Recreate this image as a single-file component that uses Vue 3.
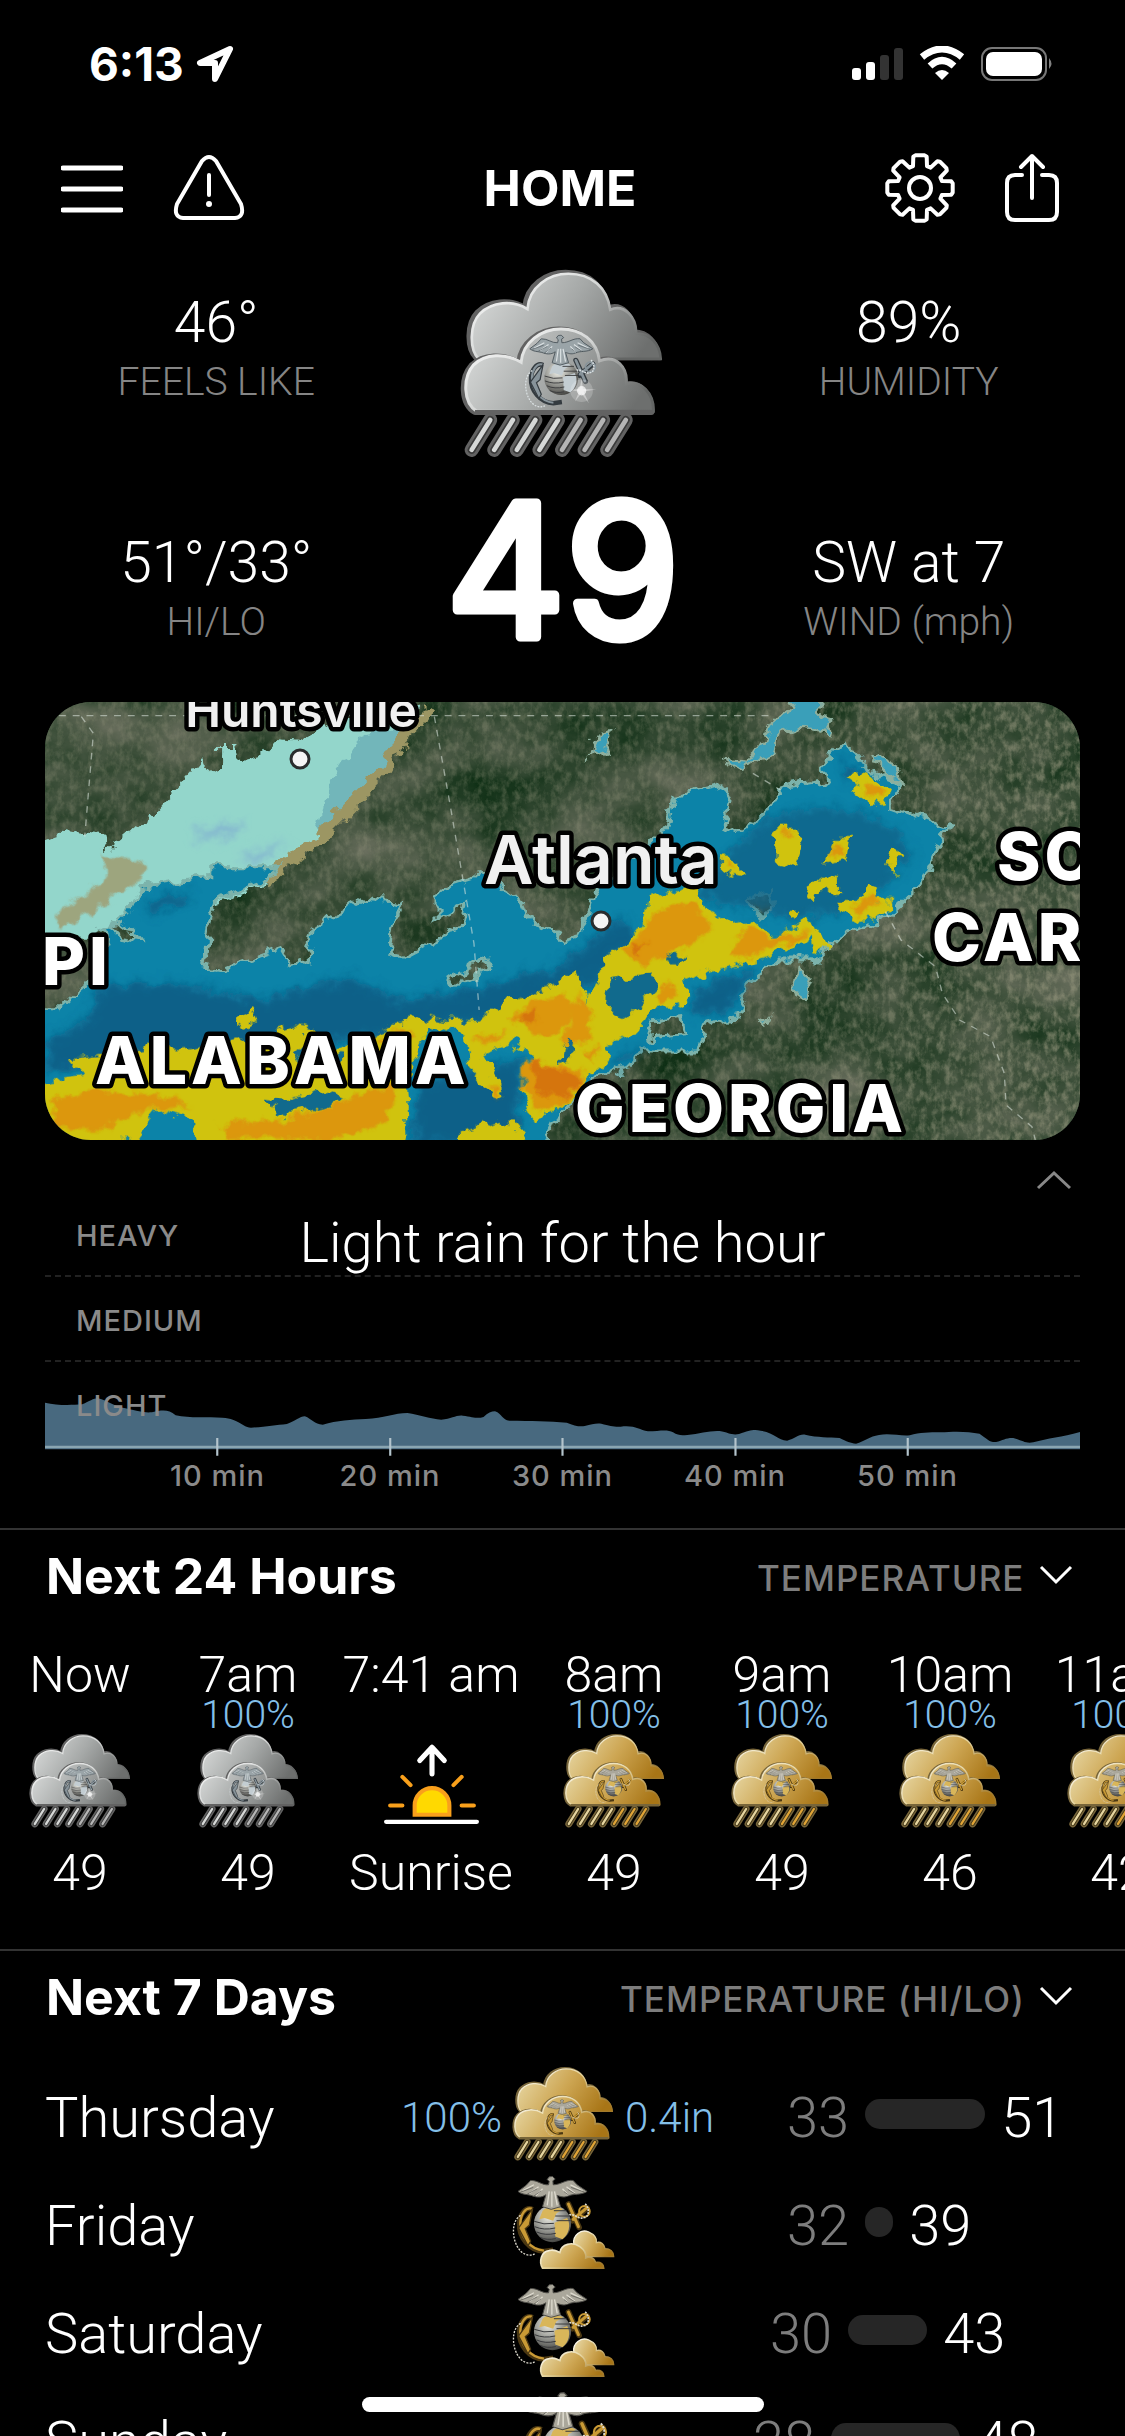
<template>
	<div class="screen">
		<!-- shared drawings, one set for night (silver) and one for day (gold) -->
		<svg class="defs" aria-hidden="true">
			<template v-for="tone in tones" :key="tone.name">
				<linearGradient :id="'body-' + tone.name" x1="0" y1="0.3" x2="1" y2="0.6">
					<stop offset="0" :stop-color="tone.light" />
					<stop offset="0.5" :stop-color="tone.mid" />
					<stop offset="1" :stop-color="tone.dark" />
				</linearGradient>
				<linearGradient :id="'rim-' + tone.name" x1="0" y1="0" x2="1" y2="0.7">
					<stop offset="0" stop-color="#fff" />
					<stop offset="0.5" :stop-color="tone.light" />
					<stop offset="1" :stop-color="tone.edge" />
				</linearGradient>
				<radialGradient :id="'globe-' + tone.name" cx="0.4" cy="0.3" r="0.75">
					<stop offset="0" stop-color="#f2f2ea" />
					<stop offset="0.5" stop-color="#9a9b96" />
					<stop offset="1" stop-color="#3d3d3a" />
				</radialGradient>
				<symbol :id="'emblem-' + tone.name" viewBox="36 376 240 248">
					<path d="M98 478C78 468 60 492 58 520C56 562 88 602 132 604L160 600" fill="none" :stroke="tone.anchorDark" stroke-width="15" />
					<path d="M96 476C76 470 62 494 61 520C60 560 90 598 132 602" fill="none" :stroke="tone.anchor" stroke-width="7" />
					<path d="M56 534L98 476L88 526L76 536L92 574L84 588Z" :fill="tone.anchor" :stroke="tone.anchorDark" stroke-width="4" />
					<path d="M62 496C34 512 36 562 52 590C64 612 86 622 104 612" fill="none" :stroke="tone.rope" stroke-width="4" stroke-dasharray="6 4" />
					<path d="M206 462L238 532M218 512L262 474" :stroke="tone.anchorDark" stroke-width="17" stroke-linecap="round" />
					<path d="M206 462L236 530M220 508L260 474" :stroke="tone.anchor" stroke-width="9" stroke-linecap="round" />
					<circle cx="254" cy="484" r="16" fill="none" :stroke="tone.anchor" stroke-width="6" />
					<path d="M200 498C226 484 232 512 256 502C272 496 266 466 254 460" fill="none" :stroke="tone.rope" stroke-width="5" stroke-dasharray="6 3" />
					<circle cx="158" cy="521" r="56" :fill="'url(#globe-' + tone.name + ')'" />
					<path d="M128 482C140 468 172 466 190 478L170 490L160 512L134 504L118 508Z" :fill="tone.land" />
					<path d="M164 518L202 504C214 524 208 552 188 568L166 560Z" :fill="tone.land" />
					<path d="M103 514Q132 526 162 520M104 530Q132 542 166 534M110 546Q136 558 168 550M120 562Q140 572 168 566M162 482H200M166 498H210M170 512H213" fill="none" stroke="#37383a" stroke-width="3" />
					<path d="M148 380L158 379L166 387L159 392L160 404C184 404 196 388 220 391L232 404L262 424C244 436 220 430 204 438C190 444 180 438 172 436L182 470L154 478L128 470L138 434C124 444 108 442 94 436C78 432 66 434 54 424L78 406L92 391C114 390 126 406 146 404L148 394L142 388Z" :fill="tone.eagle" :stroke="tone.eagleDark" stroke-width="3" />
					<path d="M68 422L102 404M88 430L116 410M108 436L128 416M248 422L212 404M226 430L200 410M206 436L188 416M148 424L142 466M156 424V470M164 424L172 466" fill="none" :stroke="tone.rope" stroke-width="4" />
					<path d="M62 426L100 412M82 432L112 416M102 438L124 422M254 426L214 412M230 434L204 418M210 438L192 424" fill="none" :stroke="tone.eagleDark" stroke-width="2" />
				</symbol>
				<symbol :id="'storm-' + tone.name" viewBox="120 50 620 575">
					<path :d="backCloud" :fill="tone.shadow" :stroke="tone.shadow" stroke-width="16" />
					<path :d="backCloud" :fill="'url(#body-' + tone.name + ')'" :stroke="'url(#rim-' + tone.name + ')'" stroke-width="8" transform="translate(8 4)" />
					<path :d="frontCloud" :fill="tone.shadow" :stroke="tone.shadow" stroke-width="18" stroke-linejoin="round" />
					<path :d="frontCloud" :fill="'url(#body-' + tone.name + ')'" :stroke="'url(#rim-' + tone.name + ')'" stroke-width="9" transform="translate(6 -2)" />
					<path d="M165 482H700" :stroke="tone.shadow" stroke-width="12" />
					<use :href="'#emblem-' + tone.name" x="308" y="248" width="230" height="226" />
					<g v-if="tone.name === 'silver'">
						<circle cx="486" cy="418" r="34" fill="#fff" opacity="0.2" />
						<path d="M486 382L490 413L530 414L492 420L508 456L485 426L466 450L478 421L452 416L480 412Z" fill="#fff" opacity="0.4" />
						<circle cx="486" cy="418" r="14" fill="#fff" opacity="0.7" />
					</g>
					<g v-for="n in 7" :key="n" stroke-linecap="round">
						<path :d="drop(n)" :stroke="tone.shadow" stroke-width="42" />
						<path :d="drop(n)" :stroke="tone.groove" stroke-width="24" />
						<path :d="drop(n)" :stroke="n < 5 ? tone.light : tone.rain" stroke-width="14" />
					</g>
				</symbol>
			</template>
			<symbol id="partly" viewBox="36 376 310 280">
				<use href="#emblem-gold" x="36" y="376" width="240" height="248" />
				<path d="M222 582C218 556 244 536 266 546C284 554 292 566 290 578C304 574 314 584 316 596C332 596 342 606 342 620H250Z" fill="url(#body-gold)" stroke="url(#rim-gold)" stroke-width="4" />
				<path d="M128 655C116 636 124 604 148 602C160 598 168 602 180 608C184 582 218 574 240 590C254 600 260 612 258 624C272 618 286 626 288 638C304 636 312 644 312 655Z" fill="url(#body-gold)" stroke="url(#rim-gold)" stroke-width="5" />
			</symbol>
			<symbol id="clear" viewBox="36 376 310 280">
				<use href="#emblem-gold" x="54" y="376" width="272" height="280" />
			</symbol>
			<symbol id="sunrise" viewBox="0 0 99 94">
				<path d="M50 40V15M38 27L50 14L62 27" fill="none" stroke="#fff" stroke-width="5" stroke-linecap="round" stroke-linejoin="round" />
				<path d="M9 71H21M79 71H91M21 43L29 51M79 43L71 51" stroke="#f9a01b" stroke-width="4" stroke-linecap="round" />
				<path d="M33 80V71A17 17 0 0 1 67 71V80Z" fill="#ffd900" stroke="#f9a01b" stroke-width="4" />
				<path d="M5 87H94" stroke="#fff" stroke-width="4" stroke-linecap="round" />
			</symbol>
		</svg>

		<div class="status">
			<div class="clock">
				<span>6:13</span>
				<svg class="locate" viewBox="0 0 38 38"><path d="M34 4L4 18H19V34Z" fill="none" stroke="#fff" stroke-width="6" stroke-linejoin="round" /></svg>
			</div>
			<svg class="signals" viewBox="0 0 202 36">
				<g fill="#fff">
					<rect x="0" y="22" width="9" height="12" rx="3" />
					<rect x="14" y="16" width="9" height="18" rx="3" />
					<rect x="28" y="9" width="9" height="25" rx="3" opacity="0.2" />
					<rect x="42" y="2" width="9" height="32" rx="3" opacity="0.2" />
					<path d="M90 34L83 27Q90 21 97 27Z" />
					<rect x="134" y="6" width="56" height="24" rx="7" />
					<path d="M197 12Q202 18 197 23Z" opacity="0.5" />
				</g>
				<path d="M70 11Q90 -5 110 11M78 20Q90 9 102 20" fill="none" stroke="#fff" stroke-width="7" />
				<rect x="130" y="2" width="64" height="32" rx="10" fill="none" stroke="#777" stroke-width="2" />
			</svg>
		</div>

		<header class="topbar">
			<div class="side">
				<button type="button" aria-label="Menu">
					<svg width="62" height="70" viewBox="0 0 62 70"><path d="M2 15H60M2 36H60M2 57H60" stroke="#fff" stroke-width="5" stroke-linecap="round" /></svg>
				</button>
				<button type="button" aria-label="Alerts">
					<svg width="72" height="70" viewBox="0 0 72 70" fill="none" stroke="#fff" stroke-width="4">
						<path d="M29 8Q36 0 43 8L68 51Q72 64 62 65H10Q0 64 4 51Z" />
						<path d="M36 22V42" stroke-linecap="round" />
						<circle cx="36" cy="51" r="3" fill="#fff" stroke="none" />
					</svg>
				</button>
			</div>
			<h1>HOME</h1>
			<div class="side end">
				<button type="button" aria-label="Settings">
					<svg width="70" height="70" viewBox="0 0 70 70" fill="none" stroke="#fff" stroke-width="4" stroke-linejoin="round">
						<path :d="gear" />
						<circle cx="35" cy="35" r="11" />
					</svg>
				</button>
				<button type="button" aria-label="Share">
					<svg width="54" height="70" viewBox="0 0 54 70" fill="none" stroke="#fff" stroke-width="4" stroke-linecap="round" stroke-linejoin="round">
						<path d="M17 22H10Q2 22 2 30V59Q2 67 10 67H44Q52 67 52 59V30Q52 22 44 22H37M27 45V3M16 14L27 3L38 14" />
					</svg>
				</button>
			</div>
		</header>

		<section class="current">
			<div class="stats">
				<div class="stat"><strong>46°</strong><span>FEELS LIKE</span></div>
				<div class="stat"><strong>51°/33°</strong><span>HI/LO</span></div>
			</div>
			<div class="now">
				<svg class="now-icon"><use href="#storm-silver" /></svg>
				<svg class="now-temp" viewBox="0 0 260 160"><text x="130" y="147">49</text></svg>
			</div>
			<div class="stats">
				<div class="stat"><strong>89%</strong><span>HUMIDITY</span></div>
				<div class="stat"><strong>SW at 7</strong><span>WIND (mph)</span></div>
			</div>
		</section>

		<div class="map">
			<svg viewBox="0 0 1035 438" preserveAspectRatio="xMidYMid slice" role="img" aria-label="Radar map">
				<filter id="terrain" x="0" y="0" width="1" height="1" color-interpolation-filters="sRGB">
					<feTurbulence type="fractalNoise" baseFrequency="0.012 0.016" numOctaves="6" seed="8" />
					<feColorMatrix values="0.5 0 0 0 -0.02  0.35 0 0 0 0.13  0.4 0 0 0 0.02  0 0 0 0 1" />
				</filter>
				<filter id="hills" x="0" y="0" width="1" height="1" color-interpolation-filters="sRGB">
					<feTurbulence type="fractalNoise" baseFrequency="0.16 0.1" numOctaves="4" seed="3" />
					<feColorMatrix values="0 0 0 0 0.6  0 0 0 0 0.6  0 0 0 0 0.5  0 2.6 0 0 -1.05" />
				</filter>
				<filter id="ragged" x="-5%" y="-5%" width="110%" height="110%" color-interpolation-filters="sRGB">
					<feTurbulence type="fractalNoise" baseFrequency="0.07" numOctaves="3" seed="5" />
					<feDisplacementMap in="SourceGraphic" scale="18" xChannelSelector="R" yChannelSelector="G" />
				</filter>
				<filter id="soft"><feGaussianBlur stdDeviation="14" /></filter>
				<filter id="softer"><feGaussianBlur stdDeviation="5" /></filter>
				<linearGradient id="east">
					<stop offset="0" stop-color="#fff" stop-opacity="0.3" />
					<stop offset="0.6" stop-color="#fff" stop-opacity="0.35" />
					<stop offset="1" stop-color="#fff" stop-opacity="0.6" />
				</linearGradient>
				<mask id="fade"><rect width="1035" height="438" fill="url(#east)" /></mask>
				<rect width="1035" height="438" filter="url(#terrain)" />
				<g mask="url(#fade)"><rect width="1035" height="438" filter="url(#hills)" /></g>
				<g filter="url(#ragged)">
					<g transform="translate(-5 -12) scale(0.3444 0.3333)">
						<path d="M-30 460L60 425L190 440L195 480L250 430L330 370L400 290L470 205L490 250L520 240L520 165L570 165L580 215L650 195L690 150L740 155L840 100L1050 60L1100 40L1060 150L1010 240L900 350L800 470L700 520L640 590L480 650L250 690L150 740L-30 740Z" fill="#93d6cb" />
						<path d="M940 130L1050 110L1000 250L880 370L800 460L830 300L870 240Z" fill="#72b6ba" />
						<path d="M1130 60L1060 130L1000 240L900 350L800 455L700 530L640 580" fill="none" stroke="#9c9663" stroke-width="34" />
						<path d="M60 720L200 630L300 560L300 520L180 490L200 560L40 680Z" fill="#a0996c" opacity="0.8" filter="url(#softer)" />
						<path d="M460 420L600 390L560 440L440 450ZM580 500L720 450L680 490L620 525Z" fill="#84b8cf" filter="url(#soft)" />
						<path d="M290 590L490 560L490 530L700 530L640 580L510 630L490 700L470 830L530 840L700 775L730 830L775 810L790 720L860 670L950 625L1050 640L1030 700L1015 790L1060 800L1150 750L1230 700L1240 640L1150 690L1150 630L1200 580L1290 550L1400 630L1430 700L1500 720L1520 760L1550 750L1580 710L1610 600L1780 455L1820 400L1840 320L1980 285L2005 340L1980 410L2030 425L2110 370L2160 290L2280 270L2270 230L2340 155L2400 240L2500 280L2470 350L2635 410L2560 580L2460 680L2320 740L2250 810L2150 810L2050 890L2030 980L1930 1000L1910 1080L1740 1080L1720 1130L1610 1160L1500 1290L1460 1380L-20 1380L-20 950L60 950L140 880L200 770L180 720L250 680ZM1190 870L1290 800L1310 830L1210 880ZM1780 990L1860 980L1870 1040L1770 1050ZM2050 630L2120 600L2130 650L2090 680ZM200 710L250 700L290 750L240 740Z" fill="#0c83a8" fill-rule="evenodd" stroke="#7cb3ab" stroke-width="9" />
						<path d="M1980 210L2060 215L2100 150L2130 100L2180 50L2170 20L2260 20L2260 80L2300 90L2290 130L2210 110L2150 130L2130 190L2030 240ZM1590 200L1620 130L1660 120L1640 180ZM2200 830L2240 870L2220 920L2190 900ZM2100 990L2120 980L2110 1000ZM2410 190L2490 230L2510 280L2460 260Z" fill="#3a9fb9" stroke="#8eaf9d" stroke-width="7" />
						<g fill="#0f6188" filter="url(#soft)">
							<path d="M180 880L420 880L640 930L900 860L1040 930L1250 900L1500 830L1690 680L1740 740L1500 980L1200 1000L1000 1040L800 1060L640 1080L400 1120L15 1140L15 1060L140 980Z" />
							<path d="M1990 500L2100 390L2240 350L2380 360L2500 430L2530 500L2440 600L2340 660L2200 690L2000 650L1900 610Z" opacity="0.8" />
							<path d="M1640 860L1800 850L1760 980L1680 1000ZM1900 900L2080 830L2000 960L1900 980ZM1630 1130L1760 1060L1700 1120ZM2330 200L2400 260L2340 280ZM300 640L440 600L420 640L330 670ZM1100 1180L1400 1100L1380 1360L1080 1360Z" />
						</g>
						<g fill="#d0c30e">
							<path d="M-20 1180L130 1160L90 1110L300 1080L320 1040L400 1090L560 1060L740 1010L790 1020L860 1080L980 1030L1110 975L1180 990L1280 985L1380 920L1490 880L1560 840L1590 920L1560 1000L1640 800L1680 790L1750 700L1760 620L1900 580L1930 650L1990 700L2080 690L2130 740L2230 690L2280 750L2300 770L2250 790L2240 740L2120 800L1970 840L1870 870L1880 940L1780 960L1730 1030L1650 1060L1640 1110L1590 1160L1540 1240L1430 1290L1400 1200L1440 1100L1370 1050L1290 1100L1350 1210L1320 1230L1240 1120L1230 1030L1130 1010L1060 1180L1070 1340L1060 1380L460 1380L450 1290L340 1260L270 1350L-20 1380Z" />
							<path d="M2340 270L2400 245L2460 290L2450 340L2400 345L2380 300ZM2135 410L2190 410L2210 470L2190 530L2140 520ZM2280 520L2310 450L2350 450L2340 510ZM2470 480L2500 490L2490 550L2460 520ZM2310 630L2380 630L2400 580L2440 590L2420 630L2480 630L2440 680L2360 695ZM1980 500L2040 520L2050 560L1980 545ZM2230 600L2260 560L2320 570L2320 600L2260 600L2240 635L2220 635ZM2180 650L2210 650L2200 680L2180 670ZM570 990L610 960L630 1000L580 1020ZM1220 1330L1360 1290L1410 1350L1380 1380H1230Z" />
						</g>
						<g fill="#dc9711" filter="url(#softer)">
							<path d="M1370 980L1420 930L1530 920L1550 960L1500 1040L1440 1040ZM1400 1110L1500 1120L1590 1150L1530 1240L1460 1260L1400 1200ZM1690 780L1740 740L1780 660L1900 640L1950 720L1900 760L1750 830ZM2000 790L2060 700L2120 740L2240 720L2180 760L2040 800ZM1560 900L1600 980L1590 1060L1520 1060ZM1790 920L1820 870L1850 900L1810 950ZM1570 1090L1630 1070L1600 1110Z" />
							<path d="M40 1230L170 1200L400 1220L430 1250L300 1260L180 1320L40 1320ZM520 1300L700 1290L860 1240L960 1200L1040 1180L1000 1300L860 1350L540 1350ZM980 1050L1060 1010L1090 1040L1010 1060ZM1260 1050L1370 1020L1310 1060ZM1300 1190L1340 1200L1330 1230ZM2400 280L2440 290L2440 330L2400 320ZM2150 420L2180 420L2170 440ZM2290 490L2320 460L2340 490L2310 500ZM2360 650L2420 620L2430 640L2380 680ZM1990 515L2020 525L2010 540Z" />
						</g>
						<path d="M1430 1110L1510 1140L1570 1170L1520 1230L1450 1210ZM1390 970L1440 960L1440 1000L1400 1000ZM1720 760L1760 760L1740 790Z" fill="#d5740f" filter="url(#softer)" />
						<path d="M660 1220L720 1230L820 1200L890 1220L830 1250L720 1270L690 1280ZM740 1080L880 1090L860 1130L760 1120ZM1660 870L1780 850L1790 890L1700 990L1650 970ZM1520 1060L1550 1040L1540 1110L1510 1120ZM1810 795L1880 800L1860 820L1820 820Z" fill="#116a8d" />
					</g>
				</g>
				<g transform="translate(-5 -12) scale(0.3444 0.3333)" fill="none" stroke="#dfe8e0" stroke-width="4" stroke-dasharray="20 20" opacity="0.55">
					<path d="M15 77H2130M120 80L155 130L130 440M1145 80L1190 340L1215 490L1260 760L1275 960M2070 250L2150 300M2455 665L2500 750L2600 830L2620 910L2670 990L2760 1040L2800 1150L2805 1245L2880 1310L2890 1350" />
				</g>
				<g fill="#f5f5f5" stroke="#2a2c2d" stroke-width="3">
					<circle cx="255" cy="57" r="9" />
					<circle cx="556" cy="219" r="9" />
				</g>
				<g class="place">
					<text x="256" y="25" class="city small">Huntsville</text>
					<text x="556" y="182" class="city">Atlanta</text>
					<text x="-3" y="283" class="state start">PI</text>
					<text x="50" y="382" class="state start">ALABAMA</text>
					<text x="530" y="430" class="state start">GEORGIA</text>
					<text x="952" y="178" class="state start">SO</text>
					<text x="887" y="259" class="state start">CAR</text>
				</g>
			</svg>
		</div>

		<section class="rain">
			<div class="rain-top">
				<button type="button" aria-label="Collapse">
					<svg width="36" height="20" viewBox="0 0 36 20"><path d="M2 18L18 3L34 18" fill="none" stroke="#888" stroke-width="3" /></svg>
				</button>
			</div>
			<div class="plot">
				<div v-for="level in levels" :key="level" class="level">{{ level }}</div>
				<p class="summary">Light rain for the hour</p>
				<svg class="area" viewBox="63 637 1442 285" preserveAspectRatio="none">
					<path d="M63 759C80 768 100 766 115 764C125 755 130 746 137 746C150 752 160 772 175 776C195 785 200 790 212 788C228 780 235 780 245 797C265 806 290 802 310 804C335 808 335 830 350 834C370 832 385 826 400 823C412 815 418 800 425 800C435 808 438 824 450 825C470 812 490 810 510 808C535 805 550 790 568 790C585 795 600 808 615 810C630 808 635 796 645 798C660 802 665 808 674 802C680 790 685 785 690 785C700 792 700 812 710 813C740 814 765 814 790 819C800 828 808 832 815 829C825 824 830 820 838 822C850 828 855 832 865 831C885 826 890 840 903 845C920 844 930 838 938 848C945 858 950 858 958 856C975 852 990 842 1003 844C1015 848 1020 858 1030 853C1045 842 1050 839 1060 843C1080 850 1083 870 1097 873C1108 868 1112 853 1122 855C1140 864 1155 862 1170 865C1180 875 1185 881 1193 882C1205 875 1212 860 1225 856C1240 850 1255 860 1268 857C1282 848 1295 848 1310 848C1335 844 1350 846 1365 852C1375 866 1378 878 1388 877C1398 872 1402 864 1412 865C1425 872 1428 882 1440 878C1460 866 1480 862 1505 847V899H63Z" fill="#48697f" />
					<path d="M63 892H1505" stroke="#8aa5b1" stroke-width="8" />
					<path d="M303 865V918M544 865V918M784 865V918M1025 865V918M1265 865V918" stroke="#b4c4cc" stroke-width="3" />
				</svg>
			</div>
			<div class="minutes">
				<span v-for="m in 5" :key="m">{{ m * 10 }} min</span>
			</div>
		</section>

		<section class="panel">
			<div class="panel-head">
				<h2>Next 24 Hours</h2>
				<div class="pick">
					<select aria-label="Hourly value"><option>TEMPERATURE</option></select>
					<svg width="34" height="20" viewBox="0 0 34 20"><path d="M2 2L17 17L32 2" fill="none" stroke="#fff" stroke-width="3" /></svg>
				</div>
			</div>
			<ul class="hours">
				<li v-for="hour in hours" :key="hour.time" :class="{ wide: hour.icon === 'sunrise' }">
					<span class="time">{{ hour.time }}</span>
					<span class="chance">{{ hour.chance }}</span>
					<svg class="icon"><use :href="'#' + hour.icon" /></svg>
					<span class="value">{{ hour.value }}</span>
				</li>
			</ul>
		</section>

		<section class="panel">
			<div class="panel-head">
				<h2>Next 7 Days</h2>
				<div class="pick">
					<select aria-label="Daily value"><option>TEMPERATURE (HI/LO)</option></select>
					<svg width="34" height="20" viewBox="0 0 34 20"><path d="M2 2L17 17L32 2" fill="none" stroke="#fff" stroke-width="3" /></svg>
				</div>
			</div>
			<ul class="days">
				<li v-for="day in days" :key="day.name">
					<span class="name">{{ day.name }}</span>
					<span class="chance">{{ day.chance }}</span>
					<svg class="icon"><use :href="'#' + day.icon" /></svg>
					<span class="amount">{{ day.amount }}</span>
					<div class="range" :style="{ paddingLeft: day.start + 'px' }">
						<span class="low">{{ day.low }}</span>
						<i class="bar" :style="{ width: day.span + 'px' }"></i>
						<span>{{ day.high }}</span>
					</div>
				</li>
			</ul>
		</section>

		<div class="home-bar"></div>
	</div>
</template>

<script setup>
	const tones = [
		{ name: 'silver', light: '#d6d8d7', mid: '#a5a8a7', dark: '#6d6f6e', edge: '#636564', shadow: '#626262', groove: '#3b3b3b', rain: '#b5b5b5', anchor: '#87939a', anchorDark: '#343b40', land: '#c3cdd2', rope: '#dbe1e3', eagle: '#9aa4a8', eagleDark: '#4b555a' },
		{ name: 'gold', light: '#e6d5a0', mid: '#cda653', dark: '#a87516', edge: '#a27a2b', shadow: '#77653a', groove: '#3f3315', rain: '#e0a437', anchor: '#c99a35', anchorDark: '#4a3712', land: '#d9b65a', rope: '#dedbcf', eagle: '#aaa79b', eagleDark: '#4e4d48' }
	];

	const backCloud = 'M168 318C140 290 140 215 172 182C208 146 270 140 315 168C320 100 380 62 438 62C508 62 556 104 564 170C606 152 644 192 642 242C682 240 714 272 716 318Z';
	const frontCloud = 'M165 482C122 456 122 380 155 342C190 308 250 306 298 334C303 274 358 234 418 234C478 234 526 268 534 330C584 310 620 350 614 400C660 388 698 428 696 482Z';

	// slanted rain drops under the cloud, left to right
	const drop = (n) => {
		const x = 87 + n * 68;
		return `M${x + 56} 506L${x} 596`;
	};

	// eight teeth around the middle, four corners each
	const corners = [[-22, 23], [-12, 32], [-8, 33], [8, 33], [12, 32], [22, 23]];
	const points = [];
	for (let tooth = 0; tooth < 8; tooth++) {
		corners.forEach(([turn, radius]) => {
			const a = ((tooth * 45 + (Math.abs(turn) > 20 ? turn * 0.8 : turn)) * Math.PI) / 180;
			points.push(`${(35 + radius * Math.sin(a)).toFixed(1)} ${(35 - radius * Math.cos(a)).toFixed(1)}`);
		});
	}
	const gear = 'M' + points.join('L') + 'Z';

	const levels = ['HEAVY', 'MEDIUM', 'LIGHT'];

	const hours = [
		{ time: 'Now', chance: '', icon: 'storm-silver', value: '49' },
		{ time: '7am', chance: '100%', icon: 'storm-silver', value: '49' },
		{ time: '7:41 am', chance: '', icon: 'sunrise', value: 'Sunrise' },
		{ time: '8am', chance: '100%', icon: 'storm-gold', value: '49' },
		{ time: '9am', chance: '100%', icon: 'storm-gold', value: '49' },
		{ time: '10am', chance: '100%', icon: 'storm-gold', value: '46' },
		{ time: '11am', chance: '100%', icon: 'storm-gold', value: '42' }
	];

	const days = [
		{ name: 'Thursday', chance: '100%', icon: 'storm-gold', amount: '0.4in', low: 33, high: 51, start: 42, span: 120 },
		{ name: 'Friday', chance: '', icon: 'partly', amount: '', low: 32, high: 39, start: 42, span: 28 },
		{ name: 'Saturday', chance: '', icon: 'partly', amount: '', low: 30, high: 43, start: 25, span: 79 },
		{ name: 'Sunday', chance: '', icon: 'clear', amount: '', low: 28, high: 48, start: 8, span: 129 }
	];
</script>

<style>
	body {
		background: #000;
	}
</style>

<style scoped>
	.screen {
		height: 100vh;
		overflow: hidden;
		background: #000;
		color: #fff;
		font-family: Roboto, "Liberation Sans", sans-serif;
		font-weight: 300;
	}

	.defs {
		position: absolute;
		width: 0;
		height: 0;
	}

	svg {
		display: block;
		flex: none;
	}

	h1, h2, p, ul {
		margin: 0;
		padding: 0;
		list-style: none;
	}

	button {
		padding: 0;
		border: 0;
		background: none;
	}

	h1, h2, .clock {
		font-family: Inter, sans-serif;
		font-weight: 700;
	}

	.status {
		display: flex;
		justify-content: space-between;
		align-items: center;
		height: 128px;
		padding: 0 71px 0 89px;
	}

	.clock {
		display: flex;
		align-items: center;
		gap: 12px;
		font-size: 46px;
	}

	.locate {
		width: 38px;
		height: 38px;
	}

	.signals {
		width: 202px;
		height: 36px;
	}

	.topbar {
		display: flex;
		align-items: center;
		height: 120px;
		padding: 0 66px 0 61px;
	}

	.side {
		display: flex;
		flex: 1;
		gap: 50px;
	}

	.end {
		justify-content: flex-end;
	}

	h1, h2 {
		font-size: 50px;
		line-height: 60px;
	}

	h2 {
		padding-top: 2px;
	}

	.current {
		display: grid;
		grid-template-columns: 1fr 350px 1fr;
		height: 454px;
		padding: 0 45px;
	}

	.stats {
		display: flex;
		flex-direction: column;
		gap: 127px;
		padding-top: 43px;
		text-align: center;
	}

	.stat strong {
		display: block;
		margin-bottom: 5px;
		font-size: 57px;
		font-weight: 300;
		line-height: 64px;
	}

	.stat span {
		display: block;
		color: #858585;
		font-size: 39px;
		line-height: 44px;
	}

	.now {
		display: flex;
		flex-direction: column;
		align-items: center;
		padding-top: 20px;
	}

	.now-icon {
		width: 206px;
		height: 192px;
	}

	.now-temp {
		width: 260px;
		height: 160px;
		margin-top: 30px;
		overflow: visible;
	}

	.now-temp text {
		fill: #fff;
		stroke: #fff;
		stroke-width: 9px;
		stroke-linejoin: round;
		font-family: Inter, sans-serif;
		font-size: 184px;
		font-weight: 400;
		text-anchor: middle;
	}

	.map {
		height: 438px;
		margin: 0 45px;
		overflow: hidden;
		border-radius: 46px;
		background: #304a35;
	}

	.map svg {
		width: 100%;
		height: 100%;
	}

	.place text {
		fill: #fff;
		stroke: #000;
		stroke-width: 9px;
		stroke-linejoin: round;
		paint-order: stroke;
		font-family: Inter, sans-serif;
		text-anchor: middle;
	}

	.place .city {
		fill: #f0f0f0;
		font-size: 68px;
		font-weight: 600;
	}

	.place .small {
		font-size: 48px;
	}

	.place .state {
		font-size: 66px;
		font-weight: 800;
		letter-spacing: 4px;
	}

	.place .start {
		text-anchor: start;
	}

	.rain {
		padding: 0 45px 35px;
	}

	.rain-top {
		display: flex;
		justify-content: flex-end;
		height: 24px;
		padding: 28px 8px 0;
	}

	.plot {
		position: relative;
	}

	.level {
		height: 83px;
		padding-left: 31px;
		border-bottom: 2px dashed #222;
		line-height: 88px;
	}

	.level:nth-child(3) {
		border-color: transparent;
	}

	.level, .minutes {
		color: #8a8a8a;
		font-family: Inter, sans-serif;
		font-size: 29px;
		font-weight: 500;
		letter-spacing: 1px;
	}

	.summary {
		position: absolute;
		top: 16px;
		left: 0;
		right: 0;
		font-size: 56px;
		line-height: 70px;
		text-align: center;
	}

	.area {
		position: absolute;
		top: 170px;
		left: 0;
		width: 100%;
		height: 95px;
	}

	.level:nth-child(3) {
		position: relative;
		z-index: 1;
	}

	.minutes {
		display: flex;
		padding: 12px 8.333% 0;
		line-height: 34px;
	}

	.minutes span {
		flex: 1;
		text-align: center;
	}

	.panel {
		border-top: 2px solid #333;
	}

	.panel-head {
		display: flex;
		justify-content: space-between;
		align-items: center;
		height: 89px;
		padding: 0 52px 0 46px;
	}

	.pick {
		display: flex;
		align-items: center;
		gap: 14px;
	}

	select {
		padding: 6px 0 0;
		border: 0;
		background: none;
		color: #7d7d7d;
		appearance: none;
		font-family: Inter, sans-serif;
		font-size: 35px;
		font-weight: 500;
		line-height: 44px;
		letter-spacing: 1px;
	}

	.hours {
		display: flex;
		height: 298px;
		padding-top: 32px;
		margin-left: -4px;
		overflow: hidden;
	}

	.hours li {
		display: flex;
		flex: none;
		flex-direction: column;
		align-items: center;
		width: 168px;
		font-size: 50px;
	}

	.hours .wide {
		width: 198px;
	}

	.time {
		line-height: 48px;
	}

	.chance, .amount {
		color: #83bfe8;
	}

	.hours .chance {
		height: 32px;
		font-size: 39px;
		line-height: 32px;
	}

	.icon {
		width: 103px;
		height: 96px;
	}

	.hours .icon {
		margin-top: 2px;
	}

	.value {
		margin-top: 14px;
		line-height: 60px;
	}

	.days {
		padding: 20px 45px 0;
	}

	.days li {
		display: grid;
		grid-template-columns: 1fr 110px 103px 110px 335px;
		column-gap: 10px;
		align-items: center;
		height: 108px;
		font-size: 56px;
	}

	.days .chance {
		padding-top: 6px;
		font-size: 42px;
		text-align: right;
	}

	.amount {
		padding-top: 6px;
		font-size: 42px;
	}

	.name {
		padding-top: 8px;
	}

	.range {
		display: flex;
		align-items: center;
		gap: 16px;
		box-sizing: border-box;
	}

	.range span {
		padding-top: 8px;
	}

	.low {
		color: #7d7d7d;
	}

	.bar {
		height: 30px;
		border-radius: 15px;
		background: #262626;
	}

	.home-bar {
		position: fixed;
		bottom: 24px;
		left: 50%;
		width: 402px;
		height: 15px;
		margin-left: -201px;
		border-radius: 8px;
		background: #fff;
	}
</style>
